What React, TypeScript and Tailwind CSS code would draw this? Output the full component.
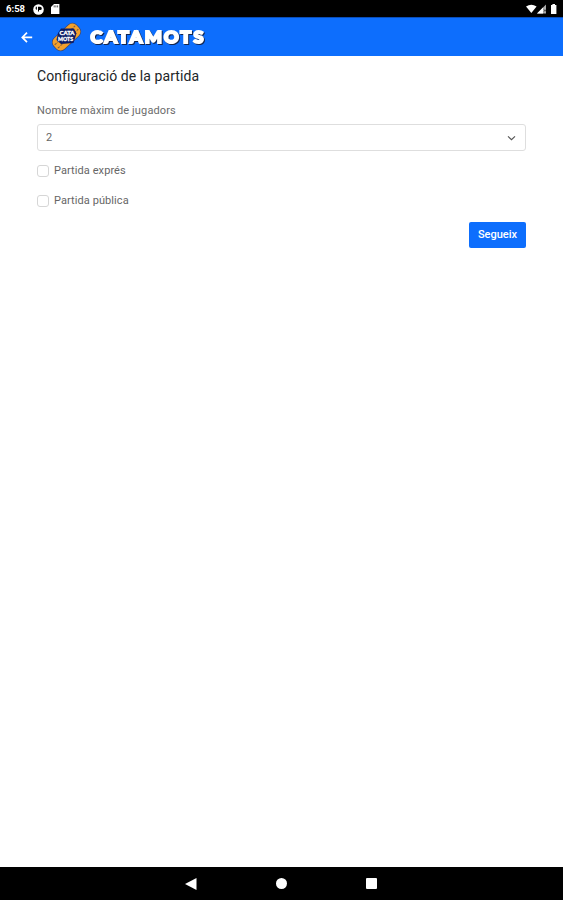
import React from "react";

function StatusBar() {
  return (
    <div className="flex h-[17px] shrink-0 items-center bg-black pl-[6px] pr-[5px] pt-px text-white">
      <span className="w-[27px] text-[9.5px] font-bold leading-none">6:58</span>
      <svg className="h-[11px] w-[11px]" viewBox="0 0 11 11">
        <circle cx="5.5" cy="5.5" r="5.3" fill="#fff" />
        <path d="M5 2.8H7.2a1.6 1.6 0 0 1 0 3.2H6V7.6H5z" fill="#000" />
        <path d="M2.8 2.8L4 2.8L4 6L2.6 5z" fill="#222" />
      </svg>
      <svg className="ml-[7px] h-[10px] w-[9px]" viewBox="0 0 9 10">
        <path d="M3 0h5.4v10H0V3z" fill="#fff" />
        <path d="M3.2 1.4v2M4.9 1.4v2M6.6 1.4v2" stroke="#333" strokeWidth=".8" />
      </svg>
      <svg className="ml-auto h-[10px] w-[33px]" viewBox="0 0 33 10">
        <path d="M1 2.6Q6.3-1 11.6 2.6L6.3 9z" fill="#fff" />
        <path d="M21 0.5V9.5H12z" fill="#aaa" />
        <path d="M18 3.5V9.5H12z" fill="#fff" />
        <path d="M19 5.5l2 2m0-2l-2 2" stroke="#111" strokeWidth=".7" />
        <path d="M27.4 0h2.6v1h1.4v9H26V1h1.4z" fill="#fff" />
      </svg>
    </div>
  );
}

function Logo() {
  return (
    <svg className="ml-[19px] h-[30px] w-[160px]" viewBox="0 0 160 30">
      <g transform="translate(14.5 15) rotate(-43)">
        <rect x="-16" y="-8" width="32" height="16" rx="6" fill="#3b4a78" />
        <rect x="-15.3" y="-7.3" width="30.6" height="14.6" rx="5.5" fill="#f2a02c" />
        <path d="M-14-2.3H14M-14 2.3H14" stroke="#7a5b45" strokeWidth="1" strokeDasharray="2.5 1.2" />
      </g>
      <path d="M6 11L9 6.5L22 6.5L24.5 11.5L21.5 21L9 22L4.5 18z" fill="#0b1c66" />
      <g fill="#fff" fontFamily="Lato, sans-serif" fontWeight="900" fontSize="5.5" stroke="#fff" strokeWidth=".3">
        <text x="7.5" y="13.2" textLength="15" lengthAdjust="spacingAndGlyphs">CATA</text>
        <text x="6" y="19.4" textLength="15" lengthAdjust="spacingAndGlyphs">MOTS</text>
      </g>
      <g
        className="[filter:drop-shadow(1px_1px_0px_#13264f)]"
        fontFamily="Lato, sans-serif"
        fontWeight="900"
        fontSize="17"
        letterSpacing="2"
        strokeLinejoin="miter"
      >
        <text x="38.5" y="21.2" textLength="115" lengthAdjust="spacingAndGlyphs" fill="#fff" stroke="#fff" strokeWidth="2">CATAMOTS</text>
      </g>
    </svg>
  );
}

function Check({ label }: { label: string }) {
  return (
    <label className="flex h-[14px] items-center">
      <input type="checkbox" className="-mt-px h-[12px] w-[12px] appearance-none rounded-[3px] border border-[#d6d6d6] bg-white" />
      <span className="ml-[5px] text-[11px] leading-[14px] tracking-[0.08px] text-[#666]">{label}</span>
    </label>
  );
}

export default function App() {
  return (
    <div className="flex h-[900px] w-[563px] flex-col overflow-hidden bg-white font-['Roboto',sans-serif]">
      <StatusBar />
      <header className="flex h-[39px] shrink-0 items-center border-t border-[#0a4db8] bg-[#0d6efd] pl-[21px]">
        <svg className="h-[12px] w-[12px]" viewBox="0 0 12 12" fill="none" stroke="#fff" strokeWidth="1.7">
          <path d="M11.2 6.4H1.6M6 1.7L1.3 6.4L6 11.1" />
        </svg>
        <Logo />
      </header>
      <main className="flex flex-1 flex-col px-[37px]">
        <h1 className="mt-[11px] text-[14px] leading-[18px] tracking-[0.07px] text-[#212529]">Configuració de la partida</h1>
        <div className="mt-[19px] text-[11px] leading-[14px] tracking-[0.13px] text-[#6c6c6c]">Nombre màxim de jugadors</div>
        <div className="mt-[6px] flex h-[27px] items-center justify-between rounded-[3px] border border-[#dedede] pl-[8px] pr-[9px] text-[11px] text-[#666]">
          <span className="pt-px">2</span>
          <svg className="h-[8px] w-[9px]" viewBox="0 0 9 8" fill="none" stroke="#555" strokeWidth="1.2">
            <path d="M1 2.4L4.5 5.6L8 2.4" />
          </svg>
        </div>
        <div className="mt-[13px] flex flex-col gap-[16px]">
          <Check label="Partida exprés" />
          <Check label="Partida pública" />
        </div>
        <button className="mt-[14px] h-[26px] w-[57px] self-end rounded-[2px] bg-[#0d6efd] text-[11px] font-medium text-white">Segueix</button>
      </main>
      <nav className="flex h-[33px] shrink-0 items-center bg-black pl-[185px]">
        <svg className="h-[12px] w-[12px]" viewBox="0 0 12 12"><path d="M0 6L11.5 0V12z" fill="#fff" /></svg>
        <span className="ml-[79px] h-[11px] w-[11px] rounded-full bg-white" />
        <span className="ml-[79px] h-[11px] w-[11px] rounded-[1px] bg-white" />
      </nav>
    </div>
  );
}
